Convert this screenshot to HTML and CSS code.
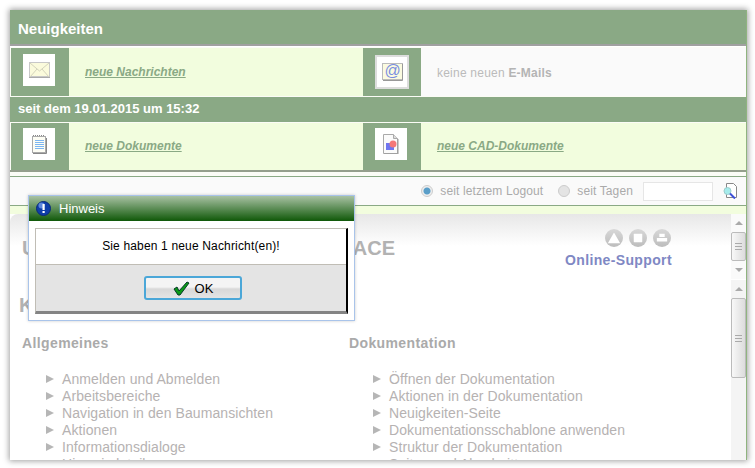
FILE: index.html
```html
<!DOCTYPE html>
<html lang="de">
<head>
<meta charset="utf-8">
<title>Neuigkeiten</title>
<link rel="stylesheet" href="styles.css">
</head>
<body>
<div class="window">
  <header class="title">Neuigkeiten</header>
  <div class="rule"></div>
  <div class="news-row">
    <div class="icon-cell"><div class="icon-box">
      <svg width="21" height="16" viewBox="0 0 21 16"><rect x="0.500" y="0.500" width="20" height="14" fill="#fbfbdc" stroke="#c8c8c8"/><path d="M1 1l9.500 8L20 1M1 15l7-8M20 15l-7-8" fill="none" stroke="#d4d4bc"/><path d="M0 15.500h21" stroke="#aaa"/></svg>
    </div></div>
    <div class="text-cell"><a class="link">neue Nachrichten</a></div>
    <div class="icon-cell"><div class="icon-box framed">
      <svg width="21" height="18" viewBox="0 0 21 18"><rect x="0.500" y="0.500" width="20" height="16" fill="#fbfbe0" stroke="#bbb"/><path d="M20.500 1v16.500H1" fill="none" stroke="#999"/><text x="10.500" y="13" class="at">@</text></svg>
    </div></div>
    <div class="text-cell off">keine neuen <b>E-Mails</b></div>
  </div>
  <div class="since">seit dem 19.01.2015 um 15:32</div>
  <div class="news-row second">
    <div class="icon-cell"><div class="icon-box">
      <svg width="15" height="19" viewBox="0 0 15 19"><rect x="0.500" y="1.500" width="13" height="16" fill="#fdfdf4" stroke="#aaa"/><path d="M14.500 3v15.500H1" fill="none" stroke="#888"/><path d="M1 .5h12" stroke="#888" stroke-dasharray="1 1"/><path d="M3 5.500h9M3 7.500h9M3 9.500h9M3 11.500h9M3 13.500h9" stroke="#7db6f2"/></svg>
    </div></div>
    <div class="text-cell"><a class="link">neue Dokumente</a></div>
    <div class="icon-cell"><div class="icon-box">
      <svg width="16" height="20" viewBox="0 0 16 20"><path d="M.5.500h10l4 4v15H.5z" fill="#fbfbfb" stroke="#aaa"/><path d="M10.500.500v4h4" fill="#ddd" stroke="#aaa"/><path d="M15 5v15H1" fill="none" stroke="#999"/><rect x="3" y="9" width="8" height="7" fill="#6f76f0"/><circle cx="10" cy="10" r="3.500" fill="#f57878"/></svg>
    </div></div>
    <div class="text-cell"><a class="link">neue CAD-Dokumente</a></div>
  </div>
  <div class="rule bottom"></div>
  <div class="toolbar">
    <span class="radio on"></span><span class="opt first">seit letztem Logout</span>
    <span class="radio"></span><span class="opt">seit Tagen</span>
    <span class="days"></span>
    <svg class="search" width="15" height="16" viewBox="0 0 15 16"><path d="M3.500.500h7l3 3v11h-10z" fill="#fff" stroke="#888"/><circle cx="4.500" cy="8" r="3.500" fill="#a6ecec" stroke="#9ccccc"/><path d="M7 10.500l5 5" stroke="#3c50d8" stroke-width="2"/></svg>
  </div>
  <div class="band"></div>
  <div class="main">
    <div class="content">
      <div class="top">
        <div class="logo"><span>U</span><span class="logo-end">ACE</span></div>
        <div class="support">
          <div class="buttons">
            <span class="disc"><svg width="14" height="12" viewBox="0 0 14 12"><path d="M7 0l7 12H0z" fill="#fff"/></svg></span>
            <span class="disc"><svg width="10" height="10" viewBox="0 0 10 10"><rect width="10" height="10" rx="1" fill="#fff"/></svg></span>
            <span class="disc"><svg width="12" height="10" viewBox="0 0 12 10"><path d="M3 0h6v4H3zM0 5h12v4H0z" fill="#fff"/></svg></span>
          </div>
          <div class="support-label">Online-Support</div>
        </div>
      </div>
      <div class="section-title">K</div>
      <div class="columns">
        <section class="column">
          <h3>Allgemeines</h3>
          <ul>
            <li>Anmelden und Abmelden</li>
            <li>Arbeitsbereiche</li>
            <li>Navigation in den Baumansichten</li>
            <li>Aktionen</li>
            <li>Informationsdialoge</li>
            <li>Hinweisdetails</li>
          </ul>
        </section>
        <section class="column">
          <h3>Dokumentation</h3>
          <ul>
            <li>Öffnen der Dokumentation</li>
            <li>Aktionen in der Dokumentation</li>
            <li>Neuigkeiten-Seite</li>
            <li>Dokumentationsschablone anwenden</li>
            <li>Struktur der Dokumentation</li>
            <li>Seiten und Abschnitte</li>
          </ul>
        </section>
      </div>
    </div>
    <div class="scrollbars">
      <div class="bar small">
        <span class="arrow up"></span>
        <span class="thumb short"><i></i></span>
        <span class="arrow down"></span>
      </div>
      <div class="bar">
        <span class="arrow up"></span>
        <span class="thumb long"><i></i></span>
      </div>
    </div>
  </div>
</div>
<div class="dialog">
  <div class="dialog-title">
    <svg width="15" height="15" viewBox="0 0 15 15"><circle cx="7.500" cy="7.500" r="7" fill="#0f3ea8" stroke="#0a2a78"/><circle cx="5.500" cy="4.500" r="3" fill="#5d86dc"/><rect x="6.500" y="3" width="2.200" height="6" fill="#fff"/><rect x="6.500" y="10" width="2.200" height="2" fill="#fff"/></svg>
    <span>Hinweis</span>
  </div>
  <div class="dialog-inner">
    <div class="message">Sie haben 1 neue Nachricht(en)!</div>
    <div class="actions">
      <div class="ok">
        <svg width="17" height="15" viewBox="0 0 17 15"><path d="M1 8l3-2 2 4 8-9 2 1-9 12H5z" fill="#0a9a16" stroke="#053a28"/></svg>
        <span>OK</span>
      </div>
    </div>
  </div>
</div>
</body>
</html>
```
FILE: styles.css
```css
html, body { margin: 0; padding: 0; height: 100%; overflow: hidden; background: #fff; }
body { font-family: "Liberation Sans", Arial, sans-serif; }
.window {
  margin: 10px 0 0 10px;
  width: 736px;
  height: 450px;
  border-right: 1px solid #8fb47f;
  background: #fbfcf6;
  box-shadow: 0 0 6px 1px rgba(0,0,0,.38);
  overflow: hidden;
  display: flex;
  flex-direction: column;
}
.title {
  height: 34px;
  line-height: 38px;
  padding-left: 8px;
  background: #8aa985;
  color: #fff;
  font-size: 15px;
  font-weight: bold;
  flex: none;
}
.rule { height: 2px; background: #a0a0a0; border-bottom: 1px solid #fff; margin-bottom: 1px; flex: none; }
.news-row {
  display: grid;
  grid-template-columns: 58px 294px 58px 1fr;
  height: 48px;
  margin-left: 1px;
  flex: none;
  background: #f2fdde;
}
.news-row.second { height: 47px; }
.icon-cell {
  background: #8aa985;
  display: flex;
  justify-content: flex-start;
  padding: 6px 0 0 12px;
}
.news-row.second .icon-cell { padding-top: 5px; }
.icon-box {
  width: 32px;
  height: 32px;
  background: #fff;
  display: flex;
  align-items: center;
  justify-content: center;
}
.framed { width: 30px; height: 30px; border: 2px solid #ddd; margin-top: 1px; }
.text-cell {
  padding: 17px 0 0 16px;
  font-size: 12px;
  line-height: 14px;
}
.second .text-cell { padding-top: 16px; }
.link { color: #8aa985; font-weight: bold; font-style: italic; text-decoration: underline; }
.off { background: #fafafa; color: #bbb; padding-top: 18px; letter-spacing: .22px; }
.off b { color: #b4b4b4; }
.at { font: 16px "Liberation Sans", Arial, sans-serif; fill: #7a8ee0; text-anchor: middle; }
.since {
  height: 25px;
  line-height: 24px;
  margin: 1px 0;
  padding-left: 8px;
  background: #8aa985;
  color: #fff;
  font-size: 13px;
  font-weight: bold;
  flex: none;
}
.rule.bottom { height: 2px; background: #949e8c; border: 0; margin: 0; }
.toolbar {
  margin-top: 4px;
  height: 28px;
  border-top: 1px solid #8aa985;
  border-bottom: 1px solid #8aa985;
  background: #fafafa;
  display: flex;
  align-items: center;
  justify-content: flex-end;
  padding-right: 8px;
  color: #aaa;
  font-size: 12px;
  flex: none;
  box-sizing: content-box;
}
.radio {
  width: 10px;
  height: 10px;
  border: 1px solid #ccc;
  border-radius: 50%;
  background: #e4e4e4;
  margin-right: 7px;
  box-sizing: content-box;
}
.radio.on { background: radial-gradient(circle, #5a9ec8 0 3px, #eee 4px); }
.opt { margin-right: 10px; letter-spacing: .12px; }
.opt.first { margin-right: 15px; }
.days {
  width: 68px;
  height: 17px;
  border: 1px solid #e6e6e6;
  background: #fff;
  margin: 0 10px 0 0;
}
.search { display: block; }
.band { height: 8px; background: #f2fdde; flex: none; }
.main { flex: 1; display: flex; min-height: 0; background: #fff; }
.content {
  flex: 1;
  min-width: 0;
  padding: 0 0 0 12px;
  background: linear-gradient(#e7e7e7, #fff 32px);
  border-top-left-radius: 8px;
  overflow: hidden;
}
.top { display: flex; height: 79px; padding-top: 15px; box-sizing: border-box; }
.logo {
  width: 373px;
  display: flex;
  justify-content: space-between;
  font-size: 20px;
  font-weight: bold;
  color: #b2b2b2;
  line-height: 24px;
  padding-top: 7px;
}
.support { margin-left: 170px; width: 108px; }
.buttons { display: flex; gap: 6px; justify-content: flex-end; padding-right: 2px; }
.disc {
  width: 18px;
  height: 18px;
  border-radius: 50%;
  background: linear-gradient(#d8d8d8, #bdbdbd);
  display: flex;
  align-items: center;
  justify-content: center;
}
.disc svg { transform: scale(.9); }
.support-label { color: #7f88c4; font-size: 14px; font-weight: bold; margin-top: 5px; line-height: 16px; white-space: nowrap; letter-spacing: .36px; }
.section-title { font-size: 20px; font-weight: bold; color: #b2b2b2; line-height: 24px; height: 42px; margin-left: -3px; }
.columns { display: flex; }
.column { width: 327px; flex: none; }
h3 { margin: 0 0 19px; font-size: 14px; line-height: 17px; color: #aaa; font-weight: bold; letter-spacing: .38px; }
ul { margin: 0; padding: 0 0 0 40px; list-style: none; }
li { position: relative; font-size: 14px; line-height: 17px; color: #b6b2b2; white-space: nowrap; letter-spacing: .08px; }
li::before {
  content: "";
  position: absolute;
  left: -16px;
  top: 4px;
  border-left: 8px solid #b6b6b6;
  border-top: 4.5px solid transparent;
  border-bottom: 4.5px solid transparent;
}
.scrollbars { width: 15px; flex: none; display: flex; flex-direction: column; }
.bar {
  background: #f4f4f4;
  display: flex;
  flex-direction: column;
  align-items: center;
  flex: 1;
  padding-top: 7px;
}
.bar.small { flex: none; height: 58px; padding-top: 7px; background: #fafafa; border-bottom: 1px solid #fff; }
.arrow { width: 0; height: 0; border-left: 4px solid transparent; border-right: 4px solid transparent; }
.arrow.up { border-bottom: 4px solid #aaa; }
.arrow.down { border-top: 4px solid #aaa; margin-top: 7px; }
.thumb {
  border: 1px solid #bbb;
  border-radius: 2px;
  background: linear-gradient(90deg, #f8f8f8, #dcdcdc);
  margin-top: 7px;
  display: flex;
  align-items: center;
  justify-content: center;
  box-sizing: border-box;
  width: 15px;
}
.thumb.short { height: 29px; }
.thumb.long { height: 80px; }
.thumb i { display: block; width: 7px; height: 7px; background: repeating-linear-gradient(#aaa 0 1px, transparent 1px 3px); }
.dialog {
  position: absolute;
  left: 28px;
  top: 195px;
  width: 325px;
  height: 124px;
  border: 1px solid #a9c4ea;
  background: #fff;
  box-shadow: 0 0 3px rgba(0,0,0,.2);
}
.dialog-title {
  height: 25px;
  display: flex;
  align-items: center;
  gap: 8px;
  padding-left: 7px;
  color: #fff;
  font-size: 13px;
  background: linear-gradient(#a9c2a4, #0f5808);
}
.dialog-inner {
  margin: 7px 6px 0;
  height: 86px;
  border-top: 1px solid #c0bdb5;
  border-left: 1px solid #c0bdb5;
  border-right: 2px solid #000;
  border-bottom: 3px solid #848484;
  box-sizing: border-box;
  display: flex;
  flex-direction: column;
}
.message { height: 35px; line-height: 34px; text-align: center; font-size: 12px; color: #000; border-bottom: 1px solid #c0bdb5; flex: none; letter-spacing: .16px; }
.actions { flex: 1; background: #e4e4e4; display: flex; justify-content: center; padding: 11px 0 0 4px; }
.ok {
  width: 98px;
  height: 24px;
  box-sizing: border-box;
  border: 2px solid #4ba7d8;
  border-radius: 3px;
  background: linear-gradient(#f4f4f4 0 45%, #d8d8d8 55%, #e4e4e4);
  display: flex;
  align-items: center;
  justify-content: center;
  gap: 5px;
  font-size: 13px;
  color: #000;
}
```
